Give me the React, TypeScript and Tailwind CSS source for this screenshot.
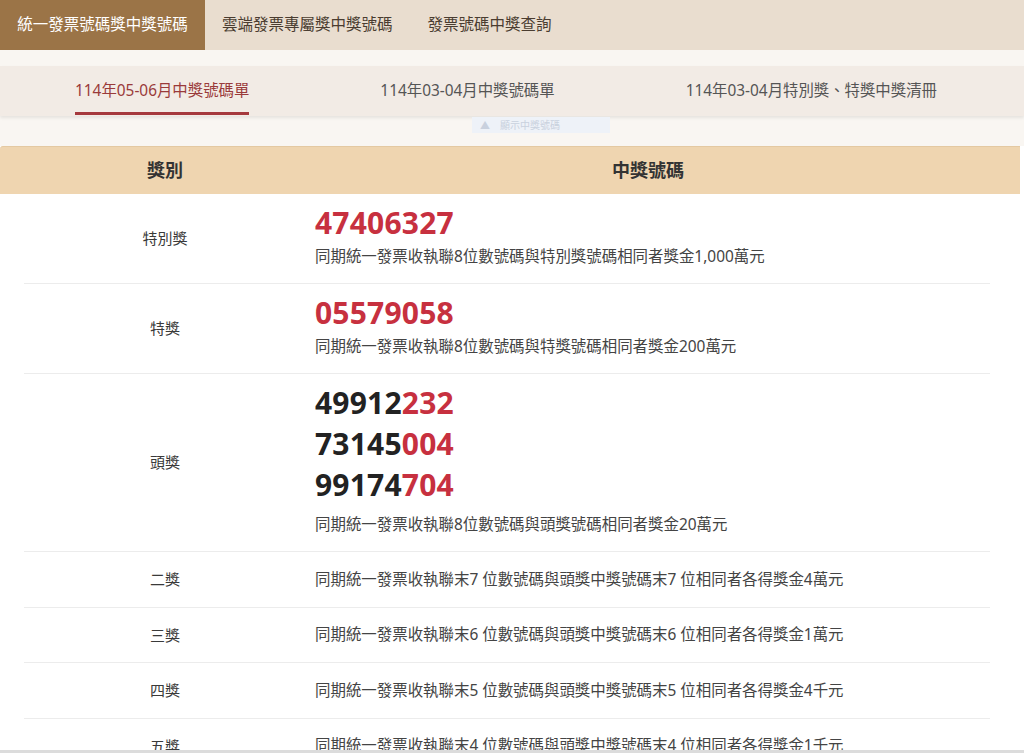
import React from "react";

const font = { fontFamily: '"Noto Sans", "Noto Sans CJK TC", sans-serif' };

type Prize = {
  label: string;
  numbers?: { black: string; red: string }[];
  desc: string;
};

const prizes: Prize[] = [
  {
    label: "特別獎",
    numbers: [{ black: "", red: "47406327" }],
    desc: "同期統一發票收執聯8位數號碼與特別獎號碼相同者獎金1,000萬元",
  },
  {
    label: "特獎",
    numbers: [{ black: "", red: "05579058" }],
    desc: "同期統一發票收執聯8位數號碼與特獎號碼相同者獎金200萬元",
  },
  {
    label: "頭獎",
    numbers: [
      { black: "49912", red: "232" },
      { black: "73145", red: "004" },
      { black: "99174", red: "704" },
    ],
    desc: "同期統一發票收執聯8位數號碼與頭獎號碼相同者獎金20萬元",
  },
  { label: "二獎", desc: "同期統一發票收執聯末7 位數號碼與頭獎中獎號碼末7 位相同者各得獎金4萬元" },
  { label: "三獎", desc: "同期統一發票收執聯末6 位數號碼與頭獎中獎號碼末6 位相同者各得獎金1萬元" },
  { label: "四獎", desc: "同期統一發票收執聯末5 位數號碼與頭獎中獎號碼末5 位相同者各得獎金4千元" },
  { label: "五獎", desc: "同期統一發票收執聯末4 位數號碼與頭獎中獎號碼末4 位相同者各得獎金1千元" },
];

function PrizeRow({ prize }: { prize: Prize }) {
  if (!prize.numbers) {
    return (
      <div className="flex h-[55.5px] items-center border-b border-[#ececec]">
        <div className="w-[282px] text-center text-[15px] text-[#3a3a3a]">{prize.label}</div>
        <div className="pl-[9px] text-[15.45px] text-[#444]">{prize.desc}</div>
      </div>
    );
  }
  const multi = prize.numbers.length > 1;
  return (
    <div className="flex items-center border-b border-[#ececec]">
      <div className="w-[282px] text-center text-[15px] text-[#3a3a3a]">{prize.label}</div>
      <div className={`pl-[9px] pt-[8px] ${multi ? "pb-[17px]" : "pb-[17px]"}`}>
        {prize.numbers.map((n, i) => (
          <div key={i} className="text-[30px] font-bold leading-[41px] tracking-[0.2px]">
            <span className="text-[#222]">{n.black}</span>
            <span className="text-[#c7303f]">{n.red}</span>
          </div>
        ))}
        <div className={`${multi ? "mt-[9px]" : "mt-[3px]"} text-[15.45px] leading-[20px] text-[#444]`}>
          {prize.desc}
        </div>
      </div>
    </div>
  );
}

export default function App() {
  return (
    <div className="relative h-[753px] w-[1024px] overflow-hidden bg-[#f9f6f2]" style={font}>
      {/* Main tabs */}
      <div className="flex h-[50px] bg-[#e9ddcf] text-[15.5px]">
        <div className="flex w-[205px] items-center justify-center bg-[#9b7447] text-white">
          統一發票號碼獎中獎號碼
        </div>
        <div className="flex items-center px-[17px] text-[#4a3c30]">雲端發票專屬獎中獎號碼</div>
        <div className="flex items-center px-[18px] text-[#4a3c30]">發票號碼中獎查詢</div>
      </div>

      {/* Period tabs */}
      <div className="mt-[16px] flex h-[50px] gap-[131px] bg-[#f2ebe5] pl-[75px] text-[15.4px] shadow-[0_2px_3px_rgba(0,0,0,0.08)]">
        <div className="relative flex items-center text-[#9a3a3a]">
          114年05-06月中獎號碼單
          <span className="absolute bottom-[1px] left-0 h-[3px] w-full bg-[#a5393d]" />
        </div>
        <div className="flex items-center text-[#555]">114年03-04月中獎號碼單</div>
        <div className="flex items-center text-[#555]">114年03-04月特別獎、特獎中獎清冊</div>
      </div>

      {/* faint hint overlay */}
      <div className="absolute left-[472px] top-[117px] flex h-[16px] w-[138px] items-center gap-[10px] bg-[#eef2f8] pl-[8px] text-[10px] text-[#c9d1de]">
        <span>▲</span>
        <span>顯示中獎號碼</span>
      </div>

      <div className="h-[30px]" />

      {/* Table */}
      <div className="bg-white">
        <div className="flex h-[48px] w-[1020px] items-center rounded-tl-[3px] border-t border-[#e4c9a2] bg-[#efd5b0] text-[18px] font-bold text-[#333]">
          <div className="w-[330px] text-center">獎別</div>
          <div className="w-[636px] text-center">中獎號碼</div>
        </div>
        <div className="mx-[24px] w-[966px]">
          {prizes.map((p) => (
            <PrizeRow key={p.label} prize={p} />
          ))}
        </div>
      </div>

      <div className="absolute bottom-0 left-0 h-[3px] w-full bg-[#dcdcdc]" />
    </div>
  );
}
